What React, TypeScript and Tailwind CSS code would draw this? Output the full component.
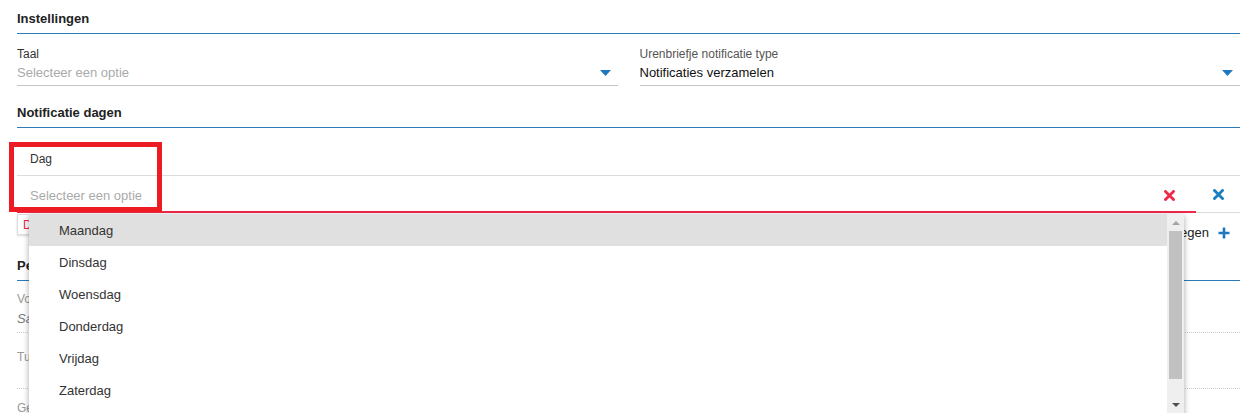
import React from "react";

const Caret = () => (
  <svg width="11" height="6" viewBox="0 0 11 6" className="shrink-0">
    <path d="M0 0 L11 0 L5.5 6 Z" fill="#1f78bd" />
  </svg>
);

const XIcon = ({ color }: { color: string }) => (
  <svg width="11" height="11" viewBox="0 0 11 11">
    <path d="M1.5 1.5 L9.5 9.5 M9.5 1.5 L1.5 9.5" stroke={color} strokeWidth="2.8" strokeLinecap="square" />
  </svg>
);

const Plus = () => (
  <svg width="12" height="12" viewBox="0 0 12 12">
    <path d="M6 0.5 V11.5 M0.5 6 H11.5" stroke="#1f78bd" strokeWidth="2.6" />
  </svg>
);

const days = ["Maandag", "Dinsdag", "Woensdag", "Donderdag", "Vrijdag", "Zaterdag", "Zondag"];

export default function App() {
  return (
    <div
      className="relative w-[1250px] h-[413px] overflow-hidden bg-white text-[13px] text-[#222]"
      style={{ fontFamily: "'Liberation Sans', Arial, sans-serif" }}
    >
      <div className="pl-[17px] pr-[10px]">
        {/* Instellingen */}
        <div className="pt-[11px] pb-[6px] leading-[16px] font-bold border-b border-[#2b7bb9]">Instellingen</div>

        <div className="flex gap-[22px]">
          <div className="flex-1">
            <div className="mt-[13px] leading-[14px] text-[12px] text-[#333]">Taal</div>
            <div className="mt-[3px] h-[22px] flex items-start justify-between border-b border-[#c4c4c4] pr-[7px]">
              <span className="leading-[18px] text-[#aaa]">Selecteer een optie</span>
              <span className="mt-[6px]"><Caret /></span>
            </div>
          </div>
          <div className="flex-1">
            <div className="mt-[13px] leading-[14px] text-[12px] text-[#555]">Urenbriefje notificatie type</div>
            <div className="mt-[3px] h-[22px] flex items-start justify-between border-b border-[#c4c4c4] pr-[7px]">
              <span className="leading-[18px] text-[#111]">Notificaties verzamelen</span>
              <span className="mt-[6px]"><Caret /></span>
            </div>
          </div>
        </div>

        {/* Notificatie dagen */}
        <div className="pt-[19px] pb-[6px] leading-[16px] font-bold border-b border-[#2b7bb9]">Notificatie dagen</div>

        <div className="h-[48px] pt-[23px] pl-[13px] leading-[16px] text-[12px] text-[#333] border-b border-[#dcdcdc]">Dag</div>

        <div className="flex h-[37px] border-b border-[#dcdcdc]">
          <div className="flex-1 flex items-center justify-between pl-[13px] pr-[21px] border-b-2 border-[#f0284a] -mb-[1px]">
            <span className="text-[#aaa] mt-[4px]">Selecteer een optie</span>
            <span className="mt-[4px]"><XIcon color="#f0284a" /></span>
          </div>
          <div className="w-[44px] flex items-center justify-center">
            <XIcon color="#1a7fc1" />
          </div>
        </div>

        <div className="h-[40px] flex items-start justify-between">
          <div className="mt-[1px] h-[21px] px-[5px] flex items-center bg-white border border-[#ddd] shadow-[0_1px_2px_rgba(0,0,0,0.15)] text-[12px] text-[#f0284a]">
            D
          </div>
          <div className="mt-[12px] flex items-center gap-[9px] pr-[10px] leading-[16px] text-[#222]">
            <span>Toevoegen</span>
            <Plus />
          </div>
        </div>

        <div className="pt-[5px] pb-[6px] leading-[16px] font-bold border-b border-[#2b7bb9]">Periode</div>

        <div className="mt-[11px] leading-[14px] text-[12px] text-[#999]">Vo</div>
        <div className="mt-[4px] h-[23px] leading-[18px] text-[#777] italic border-b border-dotted border-[#ccc]">Sa</div>

        <div className="mt-[17px] leading-[14px] text-[12px] text-[#999]">Tu</div>
        <div className="mt-[4px] h-[21px] border-b border-dotted border-[#ccc]"></div>

        <div className="mt-[12px] leading-[14px] text-[12px] text-[#999]">Ge</div>
      </div>

      {/* Dropdown list overlay */}
      <div className="absolute left-[29px] top-[214px] w-[1155px] h-[210px] bg-white shadow-[0_2px_6px_rgba(0,0,0,0.35)] flex">
        <div className="flex-1">
          {days.map((d, i) => (
            <div
              key={d}
              className={`h-[32px] flex items-center pl-[30px] pt-[2px] text-[#333] ${i === 0 ? "bg-[#e0e0e0]" : ""}`}
            >
              {d}
            </div>
          ))}
        </div>
        <div className="w-[17px] h-[199px] bg-[#efefef] flex flex-col items-center">
          <div className="h-[17px] flex items-center justify-center">
            <svg width="8" height="4" viewBox="0 0 8 4"><path d="M0 4 L8 4 L4 0 Z" fill="#a3a3a3" /></svg>
          </div>
          <div className="w-[13px] h-[148px] bg-[#c1c1c1]" />
          <div className="flex-1" />
          <div className="h-[17px] flex items-center justify-center">
            <svg width="8" height="4" viewBox="0 0 8 4"><path d="M0 0 L8 0 L4 4 Z" fill="#505050" /></svg>
          </div>
        </div>
      </div>

      {/* Red annotation box */}
      <div className="absolute left-[9px] top-[142px] w-[153px] h-[70px] border-[5px] border-[#ed1c24]" />
    </div>
  );
}
